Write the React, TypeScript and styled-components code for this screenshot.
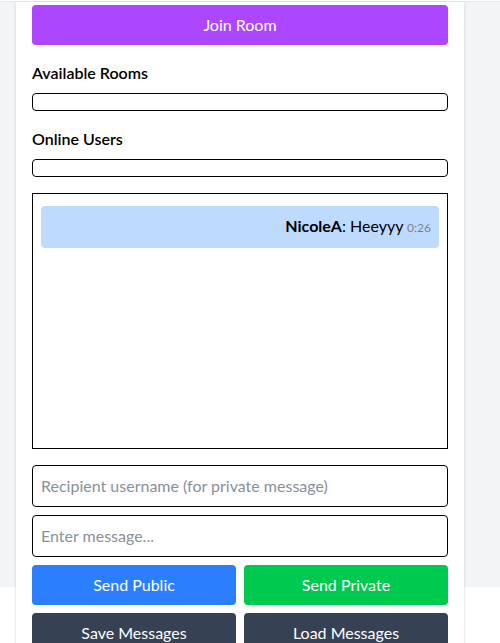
import * as React from 'react';
import styled, { createGlobalStyle } from 'styled-components';

const GlobalStyle = createGlobalStyle`
  html, body {
    margin: 0;
    padding: 0;
    background: #ffffff;
    font-family: 'Segoe UI', Lato, 'Noto Sans', sans-serif;
    color: #000;
  }
  * {
    box-sizing: border-box;
  }
`;

type Message = { from: string; text: string; time: string };

const messages: Message[] = [{ from: 'NicoleA', text: 'Heeyyy', time: '0:26' }];

const App = () => {
  return (
    <>
      <GlobalStyle />
      <Page>
        <Card>
          <Button color="#ad46ff">Join Room</Button>

          <Section>
            <Heading>Available Rooms</Heading>
            <List />
          </Section>

          <Section>
            <Heading>Online Users</Heading>
            <List />
          </Section>

          <ChatBox>
            {messages.map((m) => (
              <Bubble key={m.time}>
                <strong>{m.from}</strong>: {m.text} <Time>{m.time}</Time>
              </Bubble>
            ))}
          </ChatBox>

          <Form>
            <Input placeholder="Recipient username (for private message)" />
            <Input placeholder="Enter message..." />
            <ButtonRow>
              <Button color="#2b7fff">Send Public</Button>
              <Button color="#00c950">Send Private</Button>
            </ButtonRow>
            <ButtonRow>
              <Button color="#364153">Save Messages</Button>
              <Button color="#364153">Load Messages</Button>
            </ButtonRow>
          </Form>
        </Card>
      </Page>
    </>
  );
};

export default App;

const Page = styled.div`
  background: linear-gradient(#f3f4f6, #f3f4f6) no-repeat top left / 100% 585px;
  border-top: 1px solid #e5e7eb;
  margin-top: 1px;
  padding: 0 16px;
`;

const Card = styled.div`
  width: 448px;
  background: #ffffff;
  padding: 3px 16px 16px;
  box-shadow: 0 1px 3px rgba(0, 0, 0, 0.12), 0 1px 2px rgba(0, 0, 0, 0.06);
  display: flex;
  flex-direction: column;
  gap: 16px;
`;

const Section = styled.div`
  display: flex;
  flex-direction: column;
  gap: 8px;
`;

const Heading = styled.h2`
  margin: 0;
  font-size: 16px;
  line-height: 24px;
  font-weight: 600;
`;

const List = styled.ul`
  margin: 0;
  padding: 8px;
  list-style: none;
  border: 1px solid #000;
  border-radius: 4px;
`;

const ChatBox = styled.div`
  height: 256px;
  border: 1px solid #000;
  padding: 12px 8px 8px;
  overflow-y: auto;
`;

const Bubble = styled.div`
  background: #bedbff;
  border-radius: 4px;
  padding: 8px;
  text-align: right;
  font-size: 16px;
  line-height: 24px;
`;

const Time = styled.span`
  font-size: 12px;
  color: #7b818c;
`;

const Form = styled.div`
  display: flex;
  flex-direction: column;
  gap: 8px;
`;

const Input = styled.input`
  width: 100%;
  padding: 8px;
  font: inherit;
  font-size: 16px;
  line-height: 24px;
  border: 1px solid #000;
  border-radius: 4px;
  outline: none;

  &::placeholder {
    color: #8a8f98;
  }
`;

const ButtonRow = styled.div`
  display: grid;
  grid-template-columns: 1fr 1fr;
  gap: 8px;
`;

const Button = styled.button<{ color: string }>`
  width: 100%;
  height: 40px;
  border: none;
  border-radius: 4px;
  background: ${({ color }) => color};
  color: #ffffff;
  font: inherit;
  font-size: 16px;
  line-height: 24px;
  cursor: pointer;
`;
